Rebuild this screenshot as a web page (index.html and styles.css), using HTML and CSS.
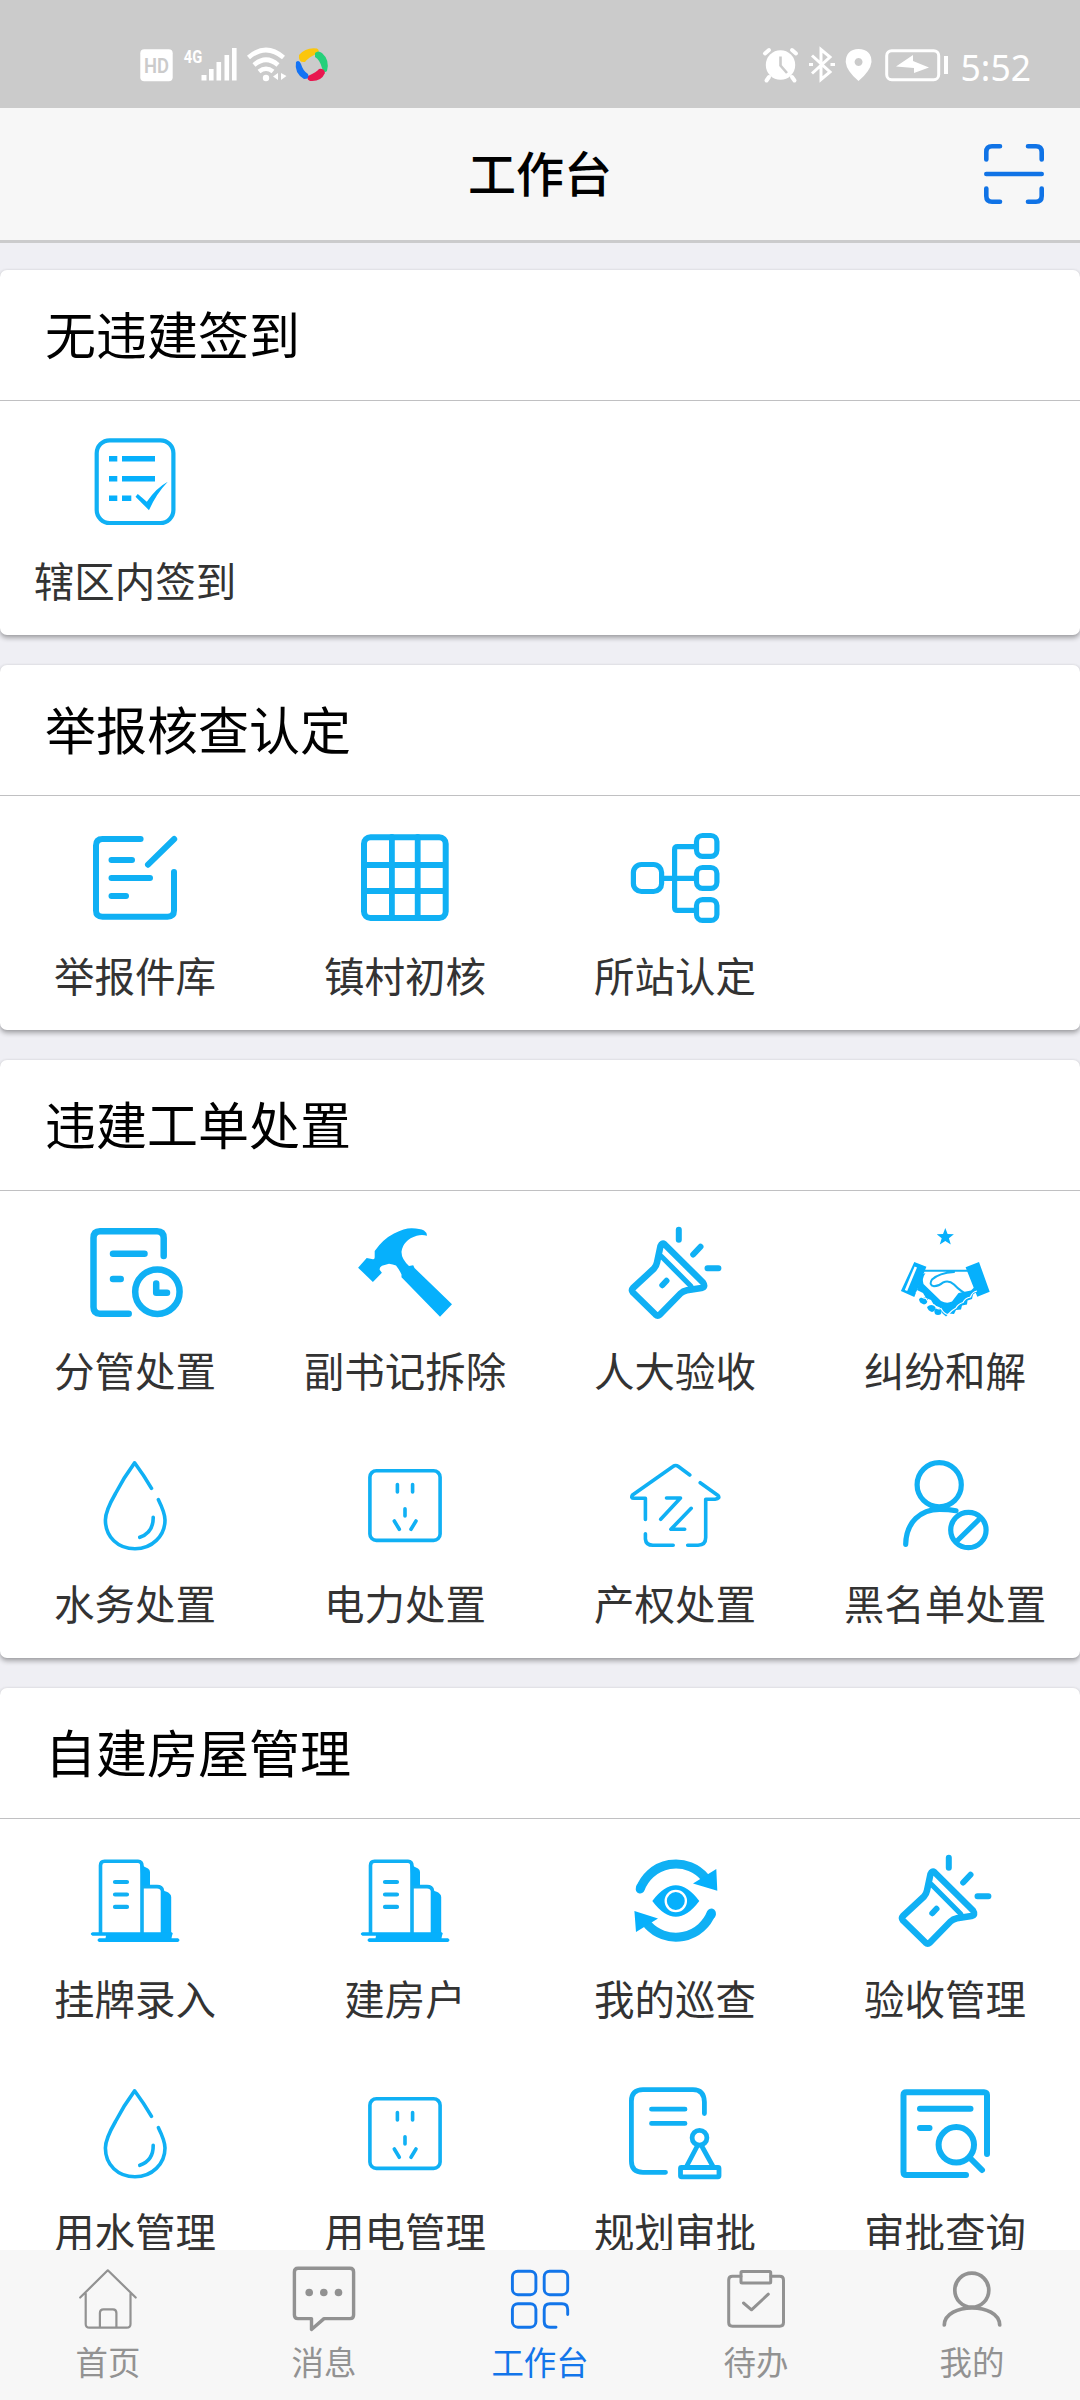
FILE: index.html
```html
<!DOCTYPE html>
<html lang="zh-CN">
<head>
<meta charset="utf-8">
<title>工作台</title>
<link rel="stylesheet" href="styles.css">
</head>
<body>
<svg class="sprite" aria-hidden="true">
  <symbol id="checklist" viewBox="0 0 100 100">
    <rect class="ln w4" x="11.7" y="7.3" width="76.7" height="82.7" rx="13"/>
    <path class="fl" d="M24 23h8.3v5.4H24zM37 23h33v5.4H37zM24 43h8.3v5.4H24zM37 43h33v5.4H37zM24 62.4h8.3v5.6H24zM37 62.4h9.3v5.6H37zM50.5 63.8L52.8 61l9 7.8Q71 55 82.8 48.7 71 61 64 77.2z"/>
  </symbol>
  <symbol id="edit" viewBox="0 0 100 100">
    <path class="ln w6" d="M55.6 11H17.500Q11 11 11 17.500V82.500Q11 88.700 17.500 88.700H82.500Q89 88.700 89 82.500V44M89.200 11L63 36.700M26.500 32H47M26.500 50H65M26.500 68H41"/>
  </symbol>
  <symbol id="grid" viewBox="0 0 100 100">
    <rect class="ln w6" x="9" y="9.300" width="81.700" height="80.700" rx="6.500"/>
    <path class="ln w55" d="M36.900 9v81M62.700 9v81M9 37h81M9 63h81"/>
  </symbol>
  <symbol id="tree" viewBox="0 0 100 100">
    <g class="ln w5">
      <rect x="8.400" y="36.500" width="28.200" height="27" rx="8"/>
      <rect x="71.500" y="7.500" width="20.400" height="20.800" rx="6"/>
      <rect x="71.500" y="39.500" width="20.400" height="20.800" rx="6"/>
      <rect x="71.500" y="71.600" width="20.400" height="20.800" rx="6"/>
      <path d="M71 18.700H52.500Q49.600 18.700 49.600 21.600V79.400Q49.600 82.300 52.500 82.300H71M37 50.300H71"/>
    </g>
  </symbol>
  <symbol id="docclock" viewBox="0 0 100 100">
    <path class="ln w65" d="M78.700 33V15Q78.700 8.200 72 8.200H15Q8.500 8.200 8.500 15V84Q8.500 90.700 15 90.700H43.700M28 30.700H59.500M28 56H35.700M71.200 60.500V69.800H82"/>
    <circle class="ln w65" cx="72.400" cy="68.700" r="22.200"/>
  </symbol>
  <symbol id="hammer" viewBox="0 0 100 100">
    <path class="fl" d="M3.100 44.700L11.700 35 18 36.300Q19.800 36.500 19.700 34V28Q28 16 39 10.500 50 5 57 5.300 65 5.500 69 7.500 72 9.500 72 12.700 67 11.500 61.700 12.700 48 17 46.500 28.700 46.300 36 54 43L58.200 42.300 59.500 45 97 81.300 85 93.700 46.500 54.300V51.500Q44.500 47 41 42.500 38 41.500 34 40.700L27 42.700Q24 44.500 24.800 47L26.900 49.700 17.900 59z"/>
  </symbol>
  <symbol id="torch" viewBox="0 0 100 100">
    <path class="ln w65" d="M39.500 21.200L78 59.500Q81 64 76.500 65L62 67.200Q58 68 55.500 70.500L35 91.500Q32.700 93.500 30.500 91.500L8 69.500Q6 67.200 8 65L29 45.500Q31.300 43 32 39.500L35.500 23Q37 19.500 39.500 21.200z"/>
    <path class="ln w5" stroke-linecap="butt" d="M36.500 33.500L65.800 63"/>
    <path class="ln w6" d="M41.500 57.800L37.300 62.200M53.800 6.700V16.700M75.500 23.800L68.200 31.500M82.500 45.300H93.400"/>
  </symbol>
  <symbol id="handshake" viewBox="0 0 100 100">
    <path class="fl" d="M50.300 5l2.300 6 6.300.200-5 4 1.900 6.300-5.500-3.500-5.500 3.500 1.900-6.300-5-4 6.300-.200zM19.300 39L31.400 43.700 19.300 74 5.900 68zM70.600 44.300L84 39 94.700 68.700 82.300 73.700z"/>
    <path class="wh" stroke-width="2.600" d="M20.800 44L11 67.500"/>
    <path class="ln" stroke-width="2" d="M29 47.700H73M59 49Q44 50 37 56.500 33.500 62 39 63.300 44 63 48 59.500 54 57 59 61.500 65 68 76 74"/>
    <path class="fl" d="M26 52L30.500 50Q26.500 56 28.500 61L46 78Q52 81 57 78.500L63.500 70 76 67.500 80.600 63 81.500 69 78 71.500 77 76 72.500 77.500 72 81.500 67 82.500 66 86.500 61 87 59 91 54 90.500 51 93.500 47.500 90.500 45 84.500 39 82 36 77 31 75 28 70 22 67z"/>
    <path class="fl" d="M24 76q4-4 9 0-.5 5-4 5.500-5-1.500-5-5.500zM32 84q4-4 9 0-1 4.500-4 5-4-1-5-5z"/>
    <circle class="fl" cx="43" cy="88.500" r="3.600"/>
    <path class="wh" stroke-width="1.200" d="M21 69Q26 75 31 75.500 34 81 39.500 82 42 87 46 85.500 49 91 53 91.500 57 87 61 85 63 81 68 79.500 70 75 75.500 74 77 69 82 68"/>
  </symbol>
  <symbol id="drop" viewBox="0 0 100 100">
    <path class="ln w33" d="M66.500 32.300Q59 19.500 49.600 6.800 39 21 30.500 37.500 20.400 55 20.400 64C20.400 81 33 92.800 50 92.800S80 80 80 64Q80 57 73.400 43.700M68.200 61.300Q68.500 76.500 54.800 81.300"/>
  </symbol>
  <symbol id="socket" viewBox="0 0 100 100">
    <rect class="ln w33" x="14.900" y="14.700" width="70.200" height="69.700" rx="6.500"/>
    <path class="ln w33" d="M42.400 28.500V36M57.600 28.500V36M50 52.700V60M39.300 65L44.300 73.300M61 65L56 73.300"/>
  </symbol>
  <symbol id="house" viewBox="0 0 100 100">
    <path class="ln w33" d="M64.800 19L53.400 10.500Q50.600 8.500 48 10.500L7.500 39Q5.500 42.300 9 42.300H20.400V63.500M20.400 77.700V83Q20.900 89.300 28 89.300H48.200M62.700 89.300H73Q80.700 89 80.700 81.500V43.300H90Q95.500 42.500 93 39.500L75.200 26.700M41.500 42H55.500L35.700 63.300M66.200 52.300L45.900 73.300H59.700"/>
  </symbol>
  <symbol id="userban" viewBox="0 0 100 100">
    <circle class="ln w5" cx="44.200" cy="28.700" r="22.100"/>
    <path class="ln w5" stroke-linecap="butt" d="M10.700 88.300C11 66 26 53.400 44.500 53.400Q54 53.400 61 54.700M62 85L85.500 62"/>
    <circle class="ln w5" cx="73.400" cy="74" r="17.700"/>
  </symbol>
  <symbol id="building" viewBox="0 0 100 100">
    <path class="ln w33" d="M15.500 82V14.500Q15.500 10.300 19.500 10.300H53Q57 10.500 57 15V82M58 35.600H72Q77 35.600 77.500 40V82"/>
    <path class="fl" d="M55 11.500L59 15.500 63 17.500Q65 18.500 65 21V34.500H57zM76 39L81 40.500Q86.200 42.500 86.200 46V82H76z"/>
    <path class="fl" d="M7.500 81.300H86.500Q88.500 82 87.200 84L86.500 87.200H93Q96 89 93 91H14Q11 89 14 87.200H20.500L21 84.800H7.500Q4 83 7.500 81.300z"/>
    <path class="ln" stroke-width="4.200" d="M30 31H42M30 43.500H42M30 55.900H42"/>
  </symbol>
  <symbol id="patrol" viewBox="0 0 100 100">
    <path class="ln" stroke-width="9" stroke-linecap="butt" d="M15.200 38A38 38 0 0 1 80 26.500M86.300 62A38 38 0 0 1 23 74"/>
    <circle class="fl" cx="15.300" cy="36.700" r="4.400"/><circle class="fl" cx="86.300" cy="63.500" r="4.500"/>
    <path class="fl" d="M91.300 17.900L92.300 39.700 68 32.400zM9.400 60L33 67.500 11 81zM27.300 50Q50.800 18.500 74.300 50 50.800 81.500 27.300 50z"/>
    <circle class="wh" stroke-width="2.300" cx="50.800" cy="50" r="10.100"/>
  </symbol>
  <symbol id="stamp" viewBox="0 0 100 100">
    <g class="ln w46">
      <path d="M79.400 29.500V18Q79 5.700 68 5.700H18Q6.400 5.700 6.400 17V77Q6.400 88.300 18 88.300H40.500M26.500 25.200H60M26.500 39.400H60M72.300 62L61.500 82.500M76.700 62L88 82.500"/>
      <circle cx="74.500" cy="53.700" r="7.400"/>
      <rect x="55.500" y="83.500" width="38.500" height="9.300" rx="1"/>
    </g>
  </symbol>
  <symbol id="query" viewBox="0 0 100 100">
    <path class="ln w6" d="M92 70V11Q92 8.200 89 8.200H11.500Q8.500 8.200 8.500 11V88Q8.500 91 11.500 91H71M25 24.800H75.500M25 44H34.500M75.500 74.500L87 86"/>
    <circle class="ln w6" cx="61.300" cy="60.800" r="17.700"/>
  </symbol>
</svg>

<div class="status">
  <svg class="st-left" viewBox="0 0 200 40">
    <rect x="1.300" y="4.300" width="32.400" height="32" rx="4" fill="#fff"/>
    <text x="5" y="27.500" class="hd" textLength="25" lengthAdjust="spacingAndGlyphs">HD</text>
    <text x="44.800" y="17.800" class="g4" textLength="18.500" lengthAdjust="spacingAndGlyphs">4G</text>
    <path fill="#fff" d="M62.500 30h5v5.500h-5zM70 24h4.600v11.500H70zM77.500 17h4.600v18.500h-4.600zM85.500 10h4.600v25.500h-4.600zM93 3h4.600v32.500H93z"/>
    <path fill="none" stroke="#fff" stroke-width="4.600" d="M109.500 12.500Q127-2.500 144.500 12.500M115 20Q127 9.500 139 20M120 26.500Q127 21 134 26.500"/>
    <circle cx="127" cy="33" r="3.200" fill="#fff"/>
    <path fill="#fff" d="M139 28v7l-5-3.500zM142 28v7l5.500-4z"/>
    <path fill="#fbc60d" d="M160 10Q167 2 178 3.500 182 6 177 9 170 12 166 17 159 18 160 10z"/>
    <path fill="#25d07a" d="M176 8Q179 5 183 8 191 15 188 26 185 29 183 23 181 15 176 12z"/>
    <path fill="#e8174f" d="M171 36Q167 34 169 31 178 27 180 24 185 23 186 28 182 37 171 36z"/>
    <path fill="#1373f5" d="M157 17Q160 14 162 19 164 26 169 29 171 34 165 34 155 28 157 17z"/>
  </svg>
  <svg class="st-right" viewBox="0 0 190 40">
    <circle cx="20.500" cy="20" r="14.700" fill="#fff"/>
    <path fill="none" stroke="#fff" stroke-width="4" stroke-linecap="round" d="M5 8.500L9 5M32 5l4 3.500M9 32l-2.500 3.500M32 32l2.500 3.500"/>
    <path fill="none" stroke="#cbcbcb" stroke-width="2.600" d="M20.500 11.500V20.500L27 28"/>
    <path fill="none" stroke="#fff" stroke-width="3" d="M52 10.500L70 27 61 34.500V4.500L70 12 52 28.500M70.500 19.500h4.500M49 19.500h4"/>
    <path fill="#fff" fill-rule="evenodd" d="M98.500 4Q111.500 4.500 111.500 17 110.500 26 98.500 36 86.500 26 85.700 17 86 4.500 98.500 4zM98.500 13a4 4 0 1 0 .1 0z"/>
    <rect x="126.700" y="5.700" width="52" height="29" rx="5" fill="none" stroke="#fff" stroke-width="3"/>
    <path fill="#fff" d="M136 21.500L153 10v6l16 6.500-15 5.500v-5zM184 11h4v18h-4z"/>
  </svg>
  <span class="time">5:52</span>
</div>

<header class="navbar">
  <h1>工作台</h1>
  <svg class="scan" viewBox="0 0 60 60"><path d="M2.300 15.500V8Q2.300 2.300 8 2.300H16M44 2.300H52Q57.700 2.300 57.700 8V15.500M2.300 44.500V52Q2.300 57.700 8 57.700H16M44 57.700H52Q57.700 57.700 57.700 52V44.500M2.300 30H57.700"/></svg>
</header>

<main class="content">
  <section class="card">
    <h2>无违建签到</h2>
    <div class="items">
      <div class="item"><svg><use href="#checklist"/></svg><span>辖区内签到</span></div>
    </div>
  </section>
  <section class="card">
    <h2>举报核查认定</h2>
    <div class="items">
      <div class="item"><svg><use href="#edit"/></svg><span>举报件库</span></div>
      <div class="item"><svg><use href="#grid"/></svg><span>镇村初核</span></div>
      <div class="item"><svg><use href="#tree"/></svg><span>所站认定</span></div>
    </div>
  </section>
  <section class="card">
    <h2>违建工单处置</h2>
    <div class="items">
      <div class="item"><svg><use href="#docclock"/></svg><span>分管处置</span></div>
      <div class="item"><svg><use href="#hammer"/></svg><span>副书记拆除</span></div>
      <div class="item"><svg><use href="#torch"/></svg><span>人大验收</span></div>
      <div class="item"><svg><use href="#handshake"/></svg><span>纠纷和解</span></div>
      <div class="item"><svg><use href="#drop"/></svg><span>水务处置</span></div>
      <div class="item"><svg><use href="#socket"/></svg><span>电力处置</span></div>
      <div class="item"><svg><use href="#house"/></svg><span>产权处置</span></div>
      <div class="item"><svg><use href="#userban"/></svg><span>黑名单处置</span></div>
    </div>
  </section>
  <section class="card">
    <h2>自建房屋管理</h2>
    <div class="items">
      <div class="item"><svg><use href="#building"/></svg><span>挂牌录入</span></div>
      <div class="item"><svg><use href="#building"/></svg><span>建房户</span></div>
      <div class="item"><svg><use href="#patrol"/></svg><span>我的巡查</span></div>
      <div class="item"><svg><use href="#torch"/></svg><span>验收管理</span></div>
      <div class="item"><svg><use href="#drop"/></svg><span>用水管理</span></div>
      <div class="item"><svg><use href="#socket"/></svg><span>用电管理</span></div>
      <div class="item"><svg><use href="#stamp"/></svg><span>规划审批</span></div>
      <div class="item"><svg><use href="#query"/></svg><span>审批查询</span></div>
    </div>
  </section>
</main>

<nav class="tabs">
  <a class="tab"><svg viewBox="0 0 72 72" stroke-width="2.200"><path d="M8.200 34.500L35.800 7.300 63.700 34.500M13.700 30.500V61Q13.700 64.700 17.500 64.700H54.700Q58.500 64.700 58.500 61V30.500M27.900 64.500V50Q27.900 46.400 31.500 46.400H41Q44.400 46.400 44.400 50V64.500"/></svg><span>首页</span></a>
  <a class="tab"><svg viewBox="0 0 72 72" stroke-width="3.400"><path d="M10 5.200H62Q65.600 5.200 65.600 9V52Q65.600 55.600 62 55.600H36L23.500 66.500V55.600H10Q6.400 55.600 6.400 52V9Q6.400 5.200 10 5.200z"/><g fill="currentColor" stroke="none"><circle cx="21.200" cy="29.500" r="3.800"/><circle cx="35.800" cy="29.500" r="3.800"/><circle cx="50.500" cy="29.500" r="3.800"/></g></svg><span>消息</span></a>
  <a class="tab active"><svg viewBox="0 0 72 72" stroke-width="2.900"><rect x="8.400" y="8.200" width="23.500" height="23.500" rx="5.500"/><rect x="40.200" y="8.200" width="23.500" height="23.500" rx="5.500"/><rect x="8.400" y="40.700" width="23.500" height="23.500" rx="5.500"/><path d="M52 64.200H46Q40.200 64.200 40.200 58.500V46.500Q40.200 40.700 46 40.700H58Q63.700 40.700 63.700 46.500V51.500"/></svg><span>工作台</span></a>
  <a class="tab"><svg viewBox="0 0 72 72" stroke-width="3"><path d="M21 13.200H12.500Q8.700 13.200 8.700 17V59.500Q8.700 63.200 12.500 63.200H59.700Q63.500 63.200 63.500 59.500V17Q63.500 13.200 59.700 13.200H51M23.500 40L31.500 46.800 48.300 31.200"/><rect x="21" y="8.400" width="29.700" height="11.700" rx="1"/></svg><span>待办</span></a>
  <a class="tab"><svg viewBox="0 0 72 72" stroke-width="3.700"><circle cx="35.800" cy="27.200" r="17"/><path d="M8.300 62C9 39.300 63 39.300 63.700 62"/></svg><span>我的</span></a>
</nav>
</body>
</html>
```
FILE: styles.css
```css
* { box-sizing: border-box; }

body {
  margin: 0;
  width: 1080px;
  height: 2400px;
  display: flex;
  flex-direction: column;
  overflow: hidden;
  background: #efeff4;
  font-family: "Noto Sans CJK SC", sans-serif;
  color: #000;
}

.sprite { display: none; }

.ln { fill: none; stroke: #10b0f4; stroke-linecap: round; stroke-linejoin: round; }
.fl { fill: #06b0fc; }
.wh { fill: none; stroke: #fff; }
.w33 { stroke-width: 3.6px; }
.w4 { stroke-width: 4.2px; }
.w46 { stroke-width: 4.8px; }
.w5 { stroke-width: 5.2px; }
.w55 { stroke-width: 5.8px; }
.w6 { stroke-width: 6px; }
.w65 { stroke-width: 6.5px; }

/* status bar */
.status {
  flex: none;
  height: 108px;
  padding: 45px 49px 0 139px;
  display: flex;
  align-items: flex-start;
  background: #cbcbcb;
}
.st-left { width: 200px; height: 40px; }
.st-right { width: 190px; height: 40px; margin-left: auto; }
.time {
  margin-left: 11px;
  color: #fff;
  font: 35.5px/45px "Noto Sans", sans-serif;
}
.hd, .g4 { font-family: Roboto, sans-serif; }
.hd { font-size: 19.5px; font-weight: 600; fill: #cbcbcb; }
.g4 { font-size: 19px; font-weight: 700; fill: #fff; }

/* title bar */
.navbar {
  flex: none;
  height: 135px;
  padding: 0 36px;
  display: grid;
  grid-template-columns: 60px 1fr 60px;
  align-items: center;
  background: #f7f7f7;
  border-bottom: 3px solid #cbcbcc;
}
.navbar h1 {
  grid-column: 2;
  margin: 0 0 6px;
  font-size: 48px;
  line-height: 60px;
  font-weight: 500;
  text-align: center;
}
.scan {
  width: 60px;
  height: 60px;
  justify-self: end;
  fill: none;
  stroke: #1073e6;
  stroke-width: 4.6px;
  stroke-linecap: round;
}

/* cards */
.content {
  flex: 1;
  min-height: 0;
  overflow: hidden;
  padding-top: 27px;
}
.card {
  margin-bottom: 30px;
  background: #fff;
  border-radius: 7px;
  box-shadow: 0 3px 5px rgba(0, 0, 0, .32), 0 0 3px rgba(0, 0, 0, .08);
}
.card h2 {
  margin: 0;
  height: 131px;
  padding-left: 45px;
  font-size: 51px;
  line-height: 126px;
  font-weight: 400;
  border-bottom: 1px solid #c0c0c2;
}
.items {
  display: grid;
  grid-template-columns: repeat(4, 270px);
  grid-auto-rows: 233px;
  padding-top: 1px;
}
.item {
  display: flex;
  flex-direction: column;
  align-items: center;
  padding-top: 31px;
}
.item svg { width: 100px; height: 100px; }
.item span {
  margin-top: 17px;
  font-size: 40.5px;
  line-height: 60px;
  color: #333;
  white-space: nowrap;
}

/* bottom tabs */
.tabs {
  flex: none;
  height: 150px;
  display: grid;
  grid-template-columns: repeat(5, 1fr);
  background: #f7f7f7;
}
.tab {
  padding-top: 13px;
  display: flex;
  flex-direction: column;
  align-items: center;
  color: #929292;
}
.tab svg {
  width: 72px;
  height: 72px;
  fill: none;
  stroke: currentColor;
  stroke-linecap: round;
  stroke-linejoin: round;
}
.tab span { margin-top: 4px; font-size: 32.4px; line-height: 44px; }
.tab.active { color: #1275ea; }
```
